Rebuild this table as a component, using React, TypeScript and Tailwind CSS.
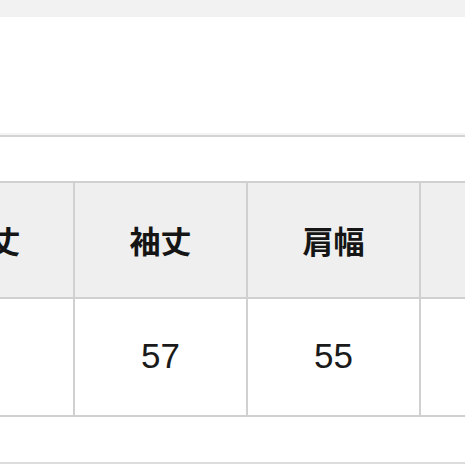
import React from "react";

const headers = ["着丈", "袖丈", "肩幅", "身幅"];
const values = ["", "57", "55", ""];

export default function App() {
  return (
    <div className="w-[465px] h-[465px] overflow-hidden bg-white relative" style={{ fontFamily: '"Liberation Sans", "Noto Sans CJK JP", sans-serif' }}>
      <div className="h-[17px] bg-[#f2f2f2]" />
      <div className="h-[116px] bg-white" />
      <div className="h-[2px] bg-[#f4f4f4]" />
      <div className="h-[2px] bg-[#d3d3d3]" />
      <div className="h-[44px] bg-white" />
      <div className="ml-[-100px] w-[700px] grid grid-cols-[173px_171px_171px_171px] grid-rows-[114px_116px] gap-[2px] py-[2px] bg-[#d0d0d0]">
        {headers.map((h, i) => (
          <div
            key={"h" + i}
            className={
              "bg-[#efefef] flex items-center justify-center text-[31px] font-bold text-[#151515] " +
              (i === 0 ? "pl-[6px]" : "")
            }
            style={{ fontFamily: '"Noto Sans CJK JP", sans-serif' }}
          >
            {h}
          </div>
        ))}
        {values.map((v, i) => (
          <div
            key={"v" + i}
            className="bg-white flex items-center justify-center text-[35px] text-[#1a1a1a] pb-[2px]"
          >
            {v}
          </div>
        ))}
      </div>
      <div className="h-[45px] bg-white" />
      <div className="h-[2px] bg-[#dcdcdc]" />
    </div>
  );
}
